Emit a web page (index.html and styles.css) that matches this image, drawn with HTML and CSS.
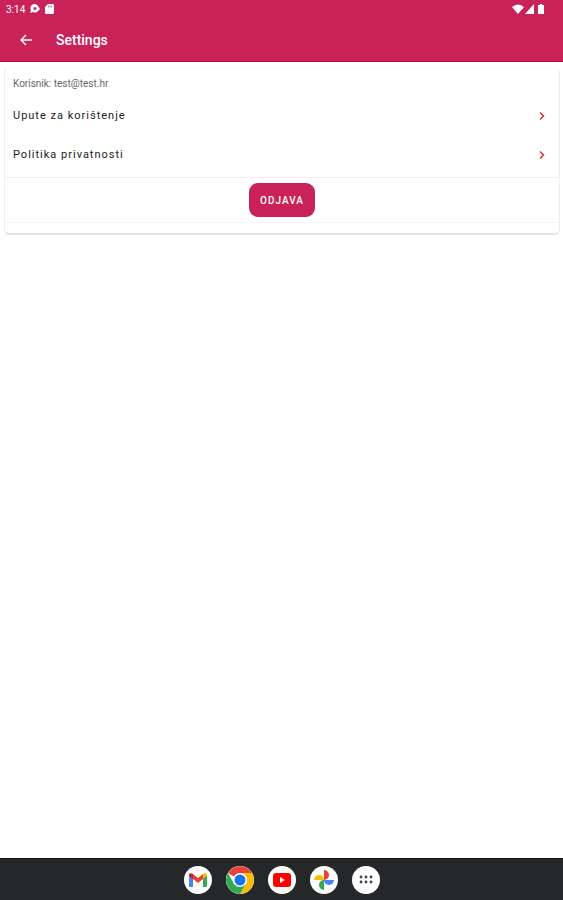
FILE: index.html
```html
<!DOCTYPE html>
<html lang="hr">
<head>
  <meta charset="UTF-8" />
  <meta name="viewport" content="width=device-width, initial-scale=1.0"/>
  <title>Settings</title>
  <link rel="stylesheet" href="styles.css">
</head>
<body>

  <header class="header">
    <div class="status-bar">
      <div class="status-left">
        <span>3:14</span>
        <svg width="12" height="10" viewBox="0 0 12 10">
          <path fill="#fff" fill-rule="evenodd" d="M5 0a4 4 0 0 1 4 2l2 3-2 2a4 4 0 0 1-5 1L1 9l1-3a4 4 0 0 1 3-6zM6 3a1.500 1.500 0 1 0 0 3 1.500 1.500 0 0 0 0-3z"/>
        </svg>
        <svg width="9" height="10" viewBox="0 0 9 10">
          <path fill="#fff" d="M3 0h5l1 1v8l-1 1H1L0 9V3z"/>
          <path stroke="#c92258" stroke-width=".6" d="M3.500 1.500v2M5 1.500v2M6.500 1.500v2"/>
        </svg>
      </div>
      <div class="status-right">
        <svg width="12" height="10" viewBox="0 0 12 10"><path fill="#fff" d="M0 3Q6-2 12 3L6 10z"/></svg>
        <svg width="9" height="10" viewBox="0 0 9 10"><path fill="#fff" d="M9 0v10H0z"/></svg>
        <svg class="battery" width="6" height="10" viewBox="0 0 6 10"><path fill="#fff" d="M2 0h2v1h2v9H0V1h2z"/></svg>
      </div>
    </div>
    <div class="app-bar">
      <button class="back-btn" aria-label="Back">
        <svg width="12" height="12" viewBox="0 0 12 12">
          <path fill="none" stroke="#fff" stroke-width="1.400" d="M12 6H1M6 1L1 6l5 5"/>
        </svg>
      </button>
      <h1>Settings</h1>
    </div>
  </header>

  <main class="content">
    <section class="card">
      <p class="user">Korisnik: test@test.hr</p>
      <a class="row" href="#upute">
        <span>Upute za korištenje</span>
        <svg width="6" height="8" viewBox="0 0 6 8"><path fill="none" stroke="#e0303c" stroke-width="1.500" d="M1 .5L4.500 4 1 7.500"/></svg>
      </a>
      <a class="row" href="#privatnost">
        <span>Politika privatnosti</span>
        <svg width="6" height="8" viewBox="0 0 6 8"><path fill="none" stroke="#e0303c" stroke-width="1.500" d="M1 .5L4.500 4 1 7.500"/></svg>
      </a>
      <div class="actions">
        <button class="logout-btn">ODJAVA</button>
      </div>
    </section>
  </main>

  <nav class="taskbar">
    <a class="app" href="#gmail" aria-label="Gmail">
      <svg width="28" height="28" viewBox="0 0 28 28">
        <path fill="#4285f4" d="M5 9l4 3v9H6q-1 0-1-1z"/>
        <path fill="#34a853" d="M23 9l-4 3v9h3q1 0 1-1z"/>
        <path fill="#ea4335" d="M9 8l5 4 5-4v5l-5 4-5-4z"/>
        <path fill="#c5221f" d="M5 9q0-3 4-1v5l-4-3z"/>
        <path fill="#fbbc04" d="M23 9q0-3-4-1v5l4-3z"/>
      </svg>
    </a>
    <a class="app" href="#chrome" aria-label="Chrome">
      <svg width="28" height="28" viewBox="0 0 28 28">
        <path fill="#ea4335" d="M14 14L1.900 7a14 14 0 0 1 24.200 0z"/>
        <path fill="#fbbc04" d="M14 7h12.100A14 14 0 0 1 14 28l6.100-10.500z"/>
        <path fill="#34a853" d="M1.900 7A14 14 0 0 0 14 28l6.100-10.500L14 14 7.900 17.500z"/>
        <circle cx="14" cy="14" r="7" fill="#fff"/>
        <circle cx="14" cy="14" r="5.500" fill="#1a73e8"/>
      </svg>
    </a>
    <a class="app" href="#youtube" aria-label="YouTube">
      <svg width="28" height="28" viewBox="0 0 28 28">
        <rect x="5" y="7" width="18" height="14" rx="3" fill="#f00"/>
        <path fill="#fff" d="M12 11l5 3-5 3z"/>
      </svg>
    </a>
    <a class="app" href="#photos" aria-label="Photos">
      <svg width="28" height="28" viewBox="0 0 28 28">
        <path fill="#ea4335" d="M14 4a5 5 0 0 1 0 10z"/>
        <path fill="#4285f4" d="M24 14a5 5 0 0 1-10 0z"/>
        <path fill="#34a853" d="M14 24a5 5 0 0 1 0-10z"/>
        <path fill="#fbbc04" d="M4 14a5 5 0 0 1 10 0z"/>
      </svg>
    </a>
    <a class="app" href="#apps" aria-label="All apps">
      <svg width="28" height="28" viewBox="0 0 28 28" fill="#3c4058">
        <circle cx="9" cy="11" r="1.400"/><circle cx="14" cy="11" r="1.400"/><circle cx="19" cy="11" r="1.400"/>
        <circle cx="9" cy="16" r="1.400"/><circle cx="14" cy="16" r="1.400"/><circle cx="19" cy="16" r="1.400"/>
      </svg>
    </a>
  </nav>

</body>
</html>
```

FILE: styles.css
```css
* {margin:0; padding:0; box-sizing:border-box;}

body {
  font-family: Roboto, sans-serif;
  min-height: 100vh;
  display: flex;
  flex-direction: column;
  background: #fff;
}

svg {display: block;}
a {color: inherit; text-decoration: none;}
button {border: none; font-family: inherit; cursor: pointer;}

.header {
  background: #c92258;
  color: #fff;
  border-bottom: 1px solid #b9063e;
}

.status-bar {
  display: flex;
  justify-content: space-between;
  height: 18px;
  padding: 0 19px 0 6px;
  font-size: 10px;
}

.status-left, .status-right {
  display: flex;
  align-items: center;
}

.status-left {gap: 4px;}
.status-right {gap: 1px;}
.battery {margin-left: 3px;}

.app-bar {
  display: flex;
  align-items: center;
  gap: 16px;
  height: 43px;
  padding: 1px 12px 0;
}

.back-btn {
  display: flex;
  align-items: center;
  justify-content: center;
  width: 28px;
  height: 28px;
  background: none;
}

.app-bar h1 {
  font-size: 14px;
  font-weight: 500;
}

.content {
  flex: 1;
  padding: 5px 3px 5px 4px;
}

.card {
  padding: 4px 0 10px;
  border: 1px solid #eee;
  border-top-color: #fafafa;
  border-bottom: 2px solid #e4e4e4;
  border-radius: 6px;
}

.user {
  padding: 4px 8px;
  font-size: 10px;
  line-height: 16px;
  color: #666;
}

.row {
  display: flex;
  align-items: center;
  justify-content: space-between;
  height: 39px;
  padding: 0 14px 0 8px;
  font-size: 11px;
  letter-spacing: 1px;
  color: #222;
}

.actions {
  display: flex;
  justify-content: center;
  margin-top: 3px;
  padding: 5px 0;
  border-top: 1px solid #fbe9ee;
  border-bottom: 1px solid #f5f5f5;
}

.logout-btn {
  height: 34px;
  padding: 0 11px;
  border-radius: 9px;
  background: #c92258;
  color: #fff;
  font-size: 10px;
  font-weight: 500;
  letter-spacing: 1px;
}

.taskbar {
  display: flex;
  align-items: center;
  justify-content: center;
  gap: 14px;
  height: 42px;
  background: #252729;
  border-top: 1px solid #111;
}

.app {
  border-radius: 50%;
  background: #fff;
  overflow: hidden;
}
```
